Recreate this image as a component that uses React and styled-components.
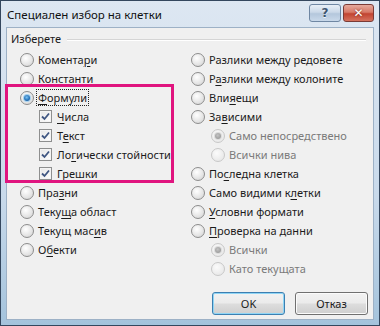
import React from 'react';
import styled, { createGlobalStyle, css } from 'styled-components';

const GlobalStyle = createGlobalStyle`
  html, body {
    margin: 0;
    padding: 0;
    background: #ffffff;
  }
  * {
    box-sizing: border-box;
  }
`;

// Window chrome
const Window = styled.div`
  width: 380px;
  height: 326px;
  display: flex;
  flex-direction: column;
  border: 1px solid #34475e;
  background: linear-gradient(180deg, #dde7f2 0%, #c9daeb 60%, #a4c3dc 100%);
  padding: 0 5px 5px 5px;
  font-family: 'Noto Sans', 'Open Sans', sans-serif;
  font-size: 11px;
  color: #1b1b1b;
`;

const TitleBar = styled.div`
  height: 26px;
  display: flex;
  align-items: flex-start;
  justify-content: space-between;
  padding-top: 3px;
`;

const Title = styled.div`
  padding: 3px 0 0 1px;
  font-size: 11.5px;
  color: #111;
  line-height: 16px;
`;

const CaptionButtons = styled.div`
  display: flex;
  gap: 2px;
`;

const CaptionButton = styled.div`
  width: ${(p) => (p.$close ? '31px' : '32px')};
  height: 18px;
  border: 1px solid ${(p) => (p.$close ? '#7a3b36' : '#6f87a3')};
  border-radius: 3px;
  display: flex;
  align-items: center;
  justify-content: center;
  font-family: 'DejaVu Sans', sans-serif;
  font-weight: bold;
  font-size: 12px;
  ${(p) =>
    p.$close
      ? css`
          background: linear-gradient(180deg, #e6a99c 0%, #d87a68 45%, #c24431 55%, #d5725e 100%);
          color: #fff;
          text-shadow: 0 0 2px #6b1d12;
        `
      : css`
          background: linear-gradient(180deg, #e8eff7 0%, #cad8e8 45%, #b4c7dc 55%, #c9d9ea 100%);
          color: #3d5570;
          text-shadow: 0 1px 0 #eef3f9;
        `}
`;

const Client = styled.div`
  position: relative;
  flex: 1;
  background: #f0f0f0;
  border: 1px solid #9db1c6;
  padding: 2px 4px 4px 3px;
  display: flex;
  flex-direction: column;
`;

// Group header
const GroupHeader = styled.div`
  display: flex;
  align-items: center;
  gap: 6px;
  height: 17px;
  padding-left: 1px;
  margin-right: 3px;
`;

const GroupLine = styled.div`
  flex: 1;
  height: 2px;
  border-top: 1px solid #d5d5d5;
  border-bottom: 1px solid #ffffff;
  margin-top: 2px;
`;

const Columns = styled.div`
  display: grid;
  grid-template-columns: 181px 1fr;
  margin-top: 3px;
`;

const Column = styled.div`
  display: flex;
  flex-direction: column;
  padding-left: ${(p) => p.$pad || 0}px;
`;

const Row = styled.div`
  height: 19px;
  display: flex;
  align-items: center;
  padding-left: ${(p) => p.$indent || 0}px;
  color: ${(p) => (p.$disabled ? '#7a7a7a' : '#1b1b1b')};
  white-space: nowrap;
`;

const RadioMark = styled.span`
  width: 14px;
  height: 14px;
  border-radius: 50%;
  margin-right: 4px;
  flex-shrink: 0;
  display: flex;
  align-items: center;
  justify-content: center;
  border: 1px solid ${(p) => (p.$disabled ? '#c8c8c8' : '#8d8d8d')};
  background: ${(p) =>
    p.$disabled
      ? 'radial-gradient(circle at 40% 35%, #fbfbfb 0%, #eaeaea 70%)'
      : 'radial-gradient(circle at 40% 35%, #ffffff 0%, #e6e6e6 55%, #cfcfcf 100%)'};

  &::after {
    content: '';
    display: ${(p) => (p.$checked ? 'block' : 'none')};
    width: 6px;
    height: 6px;
    border-radius: 50%;
    background: ${(p) =>
      p.$disabled
        ? 'radial-gradient(circle at 45% 40%, #c4c4c4 0%, #8d8d8d 100%)'
        : 'radial-gradient(circle at 45% 40%, #7fc3f2 0%, #1f6fb7 60%, #0d3f7a 100%)'};
    box-shadow: 0 0 0 1px ${(p) => (p.$disabled ? '#dcdcdc' : '#a6d1ef')};
  }
`;

const CheckMark = styled.span`
  width: 13px;
  height: 13px;
  margin-right: 5px;
  flex-shrink: 0;
  border: 1px solid #8e8f8f;
  background: linear-gradient(135deg, #e6e6e6 0%, #ffffff 100%);
  box-shadow: inset 0 0 0 1px #f4f4f4;
  display: flex;
  align-items: center;
  justify-content: center;
`;

const Label = styled.span`
  line-height: 15px;
  padding: 0 1px;
  border: 1px dotted ${(p) => (p.$focus ? '#222' : 'transparent')};
  margin-left: -2px;
`;

const Key = styled.span`
  text-decoration: underline;
  text-underline-offset: 2px;
`;

const Highlight = styled.div`
  position: absolute;
  left: -2px;
  top: 56px;
  width: 169px;
  height: 99px;
  border: 3px solid #e0157f;
  pointer-events: none;
`;

const Footer = styled.div`
  margin-top: auto;
  display: flex;
  justify-content: flex-end;
  gap: 10px;
  padding-right: 1px;
`;

const Button = styled.div`
  width: 73px;
  height: 23px;
  display: flex;
  align-items: center;
  justify-content: center;
  border-radius: 3px;
  border: 1px solid ${(p) => (p.$default ? '#3c7fb1' : '#707070')};
  background: linear-gradient(180deg, #f2f2f2 0%, #ebebeb 48%, #dddddd 52%, #cfcfcf 100%);
  box-shadow: inset 0 0 0 1px ${(p) => (p.$default ? '#8fd5f5' : '#fbfbfb')};
  color: #1b1b1b;
`;

// tiny pieces
const Check = () => (
  <svg width="9" height="9" viewBox="0 0 9 9">
    <path d="M1 4.5 L3.5 7 L8 1.5" fill="none" stroke="#3f5682" strokeWidth="1.8" />
  </svg>
);

const Text = ({ children }) => {
  // "_" marks the access key letter
  const i = children.indexOf('_');
  if (i < 0) return children;
  return (
    <>
      {children.slice(0, i)}
      <Key>{children[i + 1]}</Key>
      {children.slice(i + 2)}
    </>
  );
};

const Radio = ({ label, checked, disabled, indent, focus }) => (
  <Row $indent={indent} $disabled={disabled}>
    <RadioMark $checked={checked} $disabled={disabled} />
    <Label $focus={focus}>
      <Text>{label}</Text>
    </Label>
  </Row>
);

const CheckRow = ({ label, indent }) => (
  <Row $indent={indent}>
    <CheckMark>
      <Check />
    </CheckMark>
    <Label>
      <Text>{label}</Text>
    </Label>
  </Row>
);

const App = () => (
  <>
    <GlobalStyle />
    <Window>
      <TitleBar>
        <Title>Специален избор на клетки</Title>
        <CaptionButtons>
          <CaptionButton>?</CaptionButton>
          <CaptionButton $close>✕</CaptionButton>
        </CaptionButtons>
      </TitleBar>
      <Client>
        <GroupHeader>
          <span>Изберете</span>
          <GroupLine />
        </GroupHeader>
        <Columns>
          <Column $pad={10}>
            <Radio label="Комента_ри" />
            <Radio label="Константи" />
            <Radio label="_Формули" checked focus />
            <CheckRow label="_Числа" indent={19} />
            <CheckRow label="Т_екст" indent={19} />
            <CheckRow label="Ло_гически стойности" indent={19} />
            <CheckRow label="Гре_шки" indent={19} />
            <Radio label="Пра_зни" />
            <Radio label="Теку_ща област" />
            <Radio label="Текущ мас_ив" />
            <Radio label="О_бекти" />
          </Column>
          <Column>
            <Radio label="Разлики между редовете" />
            <Radio label="Р_азлики между колоните" />
            <Radio label="Вли_яещи" />
            <Radio label="За_висими" />
            <Radio label="Само непосредствено" checked disabled indent={20} />
            <Radio label="Всички нива" disabled indent={20} />
            <Radio label="По_следна клетка" />
            <Radio label="Само видими к_летки" />
            <Radio label="_Условни формати" />
            <Radio label="_Проверка на данни" />
            <Radio label="Всички" checked disabled indent={20} />
            <Radio label="Като текущата" disabled indent={20} />
          </Column>
        </Columns>
        <Highlight />
        <Footer>
          <Button $default>OK</Button>
          <Button>Отказ</Button>
        </Footer>
      </Client>
    </Window>
  </>
);

export default App;
